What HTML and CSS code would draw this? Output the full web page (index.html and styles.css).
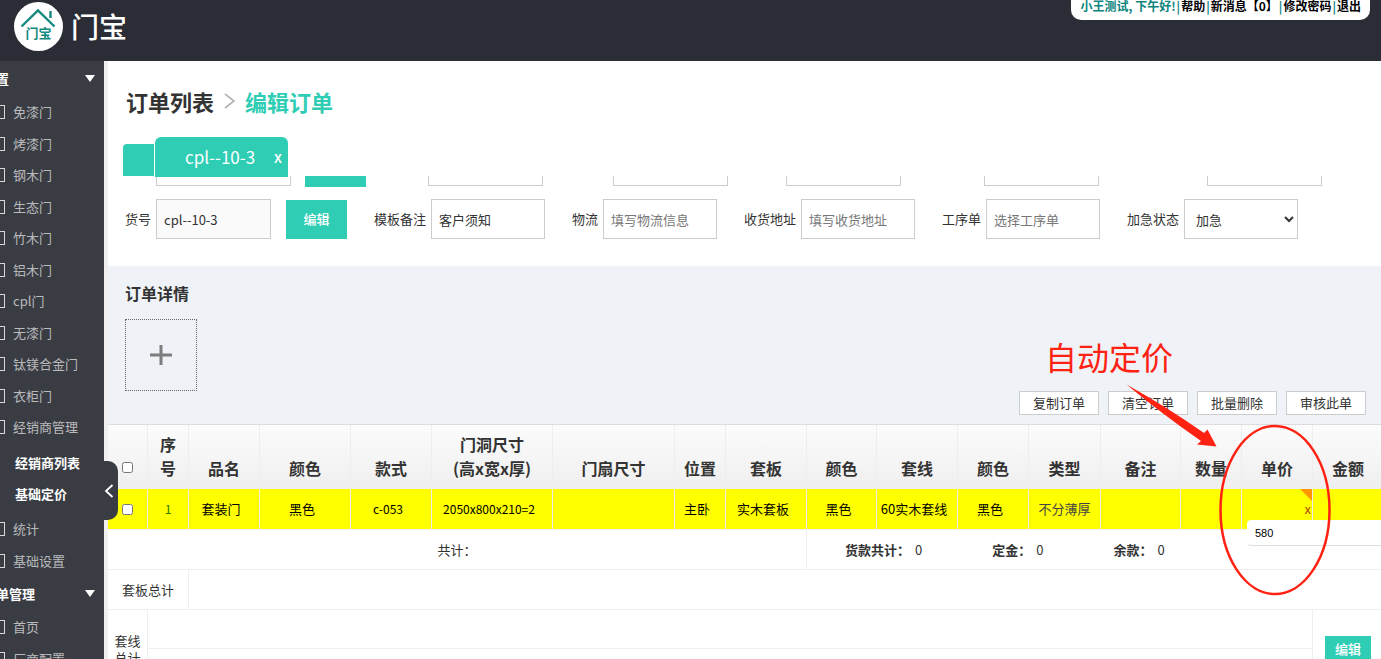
FILE: index.html
```html
<!DOCTYPE html>
<html lang="zh-CN">
<head>
<meta charset="utf-8">
<title>门宝 - 编辑订单</title>
<link rel="stylesheet" href="styles.css">
</head>
<body>
<header class="topbar">
  <svg class="logo" viewBox="0 0 49 49" aria-hidden="true">
    <circle cx="24.5" cy="24.5" r="24.5" fill="#fff"/>
    <path d="M7.500 24.500 24 8.500l16.500 16M36.500 9v7" fill="none" stroke="#14897f" stroke-width="2.400"/>
    <text class="logo-text" x="24.5" y="36" text-anchor="middle">门宝</text>
  </svg>
  <span class="brand">门宝</span>
  <nav class="account"><span>小王测试, 下午好!</span><i>|</i><a href="#">帮助</a><i>|</i><a href="#">新消息【0】</a><i>|</i><a href="#">修改密码</a><i>|</i><a href="#">退出</a></nav>
</header>
<div class="shell">
  <aside class="sidebar">
    <button class="group">设置<span class="caret"></span></button>
    <ul class="menu">
      <li><a href="#">免漆门</a></li><li><a href="#">烤漆门</a></li><li><a href="#">钢木门</a></li>
      <li><a href="#">生态门</a></li><li><a href="#">竹木门</a></li><li><a href="#">铝木门</a></li>
      <li><a href="#">cpl门</a></li><li><a href="#">无漆门</a></li><li><a href="#">钛镁合金门</a></li>
      <li><a href="#">衣柜门</a></li><li><a href="#">经销商管理</a></li>
    </ul>
    <ul class="submenu">
      <li><a href="#">经销商列表</a></li><li><a href="#">基础定价</a></li>
    </ul>
    <ul class="menu">
      <li><a href="#">统计</a></li><li><a href="#">基础设置</a></li>
    </ul>
    <button class="group">订单管理<span class="caret"></span></button>
    <ul class="menu">
      <li><a href="#">首页</a></li><li><a href="#">厂商配置</a></li>
    </ul>
  </aside>
  <button class="collapse" aria-label="收起菜单"><svg viewBox="0 0 10 14" width="10" height="14"><path d="M8.500 1 2 7l6.500 6" fill="none" stroke="#fff" stroke-width="1.800"/></svg></button>
  <main class="main">
    <h1 class="crumbs"><a href="#">订单列表</a><svg viewBox="0 0 11 16" width="11" height="16"><path d="M1 1l9 7-9 7" fill="none" stroke="#b5b5b5" stroke-width="1.700"/></svg><span class="current">编辑订单</span></h1>
    <div class="tabs">
      <button class="tab-stub" aria-label="标签列表"></button>
      <div class="tab"><span>cpl--10-3</span><button class="tab-close">x</button></div>
    </div>
    <form class="order-form">
      <div class="row-top">
        <input class="field" aria-label="订单号">
        <button type="button" class="btn" aria-label="选择"></button>
        <input class="field" aria-label="客户">
        <input class="field" aria-label="电话">
        <input class="field" aria-label="日期">
        <input class="field" aria-label="交期">
        <input class="field" aria-label="备注">
      </div>
      <div class="row-main">
        <div class="pair"><label for="sku">货号</label><input id="sku" class="field readonly" value="cpl--10-3" readonly></div>
        <button type="button" class="btn">编辑</button>
        <div class="pair"><label for="tpl">模板备注</label><input id="tpl" class="field" value="客户须知"></div>
        <div class="pair"><label for="ship">物流</label><input id="ship" class="field" placeholder="填写物流信息"></div>
        <div class="pair"><label for="addr">收货地址</label><input id="addr" class="field" placeholder="填写收货地址"></div>
        <div class="pair"><label for="proc">工序单</label><input id="proc" class="field" placeholder="选择工序单"></div>
        <div class="pair"><label for="urgent">加急状态</label><select id="urgent" class="field"><option>加急</option></select></div>
      </div>
    </form>
    <section class="details">
      <h2 class="details-title">订单详情</h2>
      <button class="add" aria-label="添加"><svg viewBox="0 0 22 22" width="22" height="22"><path d="M11 1v20M0 11h22" stroke="#7d7d7d" stroke-width="3"/></svg></button>
      <div class="tools">
        <button class="tool">复制订单</button><button class="tool">清空订单</button><button class="tool">批量删除</button><button class="tool">审核此单</button>
      </div>
      <div class="table-wrap">
      <table class="orders">
        <colgroup><col class="w40"><col class="w41"><col class="w71"><col class="w91"><col class="w81"><col class="w121"><col class="w122"><col class="w51"><col class="w81"><col class="w70"><col class="w81"><col class="w71"><col class="w72"><col class="w80"><col class="w61"><col class="w71"><col class="w71"></colgroup>
        <thead>
          <tr><th><input type="checkbox" class="tick" aria-label="全选"></th><th>序<br>号</th><th>品名</th><th>颜色</th><th>款式</th><th>门洞尺寸<br>(高x宽x厚)</th><th>门扇尺寸</th><th>位置</th><th>套板</th><th>颜色</th><th>套线</th><th>颜色</th><th>类型</th><th>备注</th><th>数量</th><th>单价</th><th>金额</th></tr>
        </thead>
        <tbody>
          <tr class="item"><td class="check"><input type="checkbox" class="tick" aria-label="选择第1行"></td><td class="num">1</td><td>套装门</td><td>黑色</td><td class="latin">c-053</td><td class="latin">2050x800x210=2</td><td></td><td>主卧</td><td>实木套板</td><td>黑色</td><td>60实木套线</td><td>黑色</td><td class="type">不分薄厚</td><td></td><td></td>
            <td class="price"><span class="corner"></span><button class="clear">x</button><input class="price-input" value="580" aria-label="单价"></td><td></td></tr>
          <tr class="sum"><td colspan="9">共计：</td><td colspan="8"><div class="totals"><span><b>货款共计：</b>0</span><span><b>定金：</b>0</span><span><b>余款：</b>0</span></div></td></tr>
          <tr class="sum"><td colspan="2">套板总计</td><td colspan="15"></td></tr>
          <tr class="line"><td rowspan="2" class="wrap">套线总计</td><td colspan="15"></td><td rowspan="2"><button class="btn small">编辑</button></td></tr>
          <tr class="line"><td colspan="15"></td></tr>
        </tbody>
      </table>
      </div>
      <div class="note">
        <span class="note-text">自动定价</span>
        <svg class="note-mark" viewBox="0 0 300 260" width="300" height="260" aria-hidden="true">
          <path d="M86.500 44.500Q127 67 164 93l3.500-3.500L176.500 106.500 157 104.500l4-3.500Q122 74 86.500 44.500Z" fill="#ff2213"/>
          <ellipse cx="235" cy="170" rx="54.500" ry="84" fill="none" stroke="#ff2213" stroke-width="2.500"/>
        </svg>
      </div>
    </section>
  </main>
</div>
</body>
</html>
```
FILE: styles.css
```css
* { box-sizing: border-box; }
html, body { height: 100%; }
body {
  margin: 0;
  display: flex;
  flex-direction: column;
  overflow: hidden;
  font: 13px/20px "Noto Sans CJK SC", "Noto Sans", sans-serif;
  color: #333;
  background: #fff;
}
a { color: inherit; text-decoration: none; }
ul { list-style: none; margin: 0; padding: 0; }
button { font: inherit; color: inherit; border: 0; padding: 0; background: none; cursor: pointer; }

.topbar {
  flex: none;
  display: flex;
  align-items: flex-start;
  height: 61px;
  padding: 0 11px 0 14px;
  background: #2a2d35;
}
.logo { width: 49px; height: 49px; margin-top: 2px; }
.logo-text { font-size: 13px; font-weight: 700; fill: #14897f; }
.brand { margin: 4px 0 0 8px; font-size: 28px; line-height: 44px; font-weight: 500; color: #fff; }
.account {
  display: flex;
  gap: 1px;
  margin-left: auto;
  padding: 0 9px 8px 10px;
  border-radius: 0 0 10px 10px;
  background: #fff;
  color: #0c857e;
  font-size: 12px;
  line-height: 12px;
  font-weight: 700;
  white-space: nowrap;
}
.account a { color: #000; }
.account i { font-style: normal; }

.shell { flex: 1; display: flex; position: relative; min-height: 0; }
.sidebar {
  flex: none;
  width: 108px;
  overflow: hidden;
  background: #393c43;
  border-right: 4px solid #f1eff0;
  color: #b9babc;
}
.group {
  display: flex;
  align-items: center;
  justify-content: space-between;
  width: 112px;
  height: 35px;
  margin-left: -17px;
  color: #fff;
  font-weight: 700;
}
.caret {
  border: 5px solid transparent;
  border-top: 7px solid #fff;
  border-bottom: 0;
}
.menu li {
  display: flex;
  align-items: center;
  height: 32px;
  margin-left: -9px;
}
.menu li:nth-child(even) { height: 31px; }
.menu li::before {
  content: "";
  width: 12px;
  height: 12px;
  margin-right: 8px;
  border: 1px solid #d8d8d8;
}
.menu a { white-space: nowrap; }
.submenu { padding: 4px 0 4px 15px; color: #fff; font-weight: 700; }
.submenu li { height: 31px; line-height: 31px; }
.collapse {
  position: absolute;
  left: 104px;
  top: 400px;
  z-index: 2;
  display: flex;
  align-items: center;
  width: 14px;
  height: 59px;
  border-radius: 0 10px 10px 0;
  background: #393c43;
}

.main { flex: 1; min-width: 0; display: flex; flex-direction: column; overflow: hidden; }
.main > * { flex: none; }
.crumbs {
  display: flex;
  align-items: center;
  gap: 10px;
  margin: 24px 18px 20px;
  font-size: 22px;
  line-height: 32px;
  font-weight: 700;
}
.current { color: #30cdb5; }
.tabs { display: flex; align-items: flex-end; gap: 1px; height: 39px; padding-left: 15px; }
.tab-stub { width: 31px; height: 32px; border-radius: 4px 0 0 0; background: #30cdb5; }
.tab {
  position: relative;
  z-index: 1;
  display: flex;
  align-items: center;
  justify-content: flex-end;
  gap: 19px;
  width: 133px;
  height: 40px;
  padding-right: 6px;
  margin-bottom: -1px;
  border-radius: 6px 6px 0 0;
  background: #30cdb5;
  color: #fff;
  font-size: 17px;
}
.tab-close { font-size: 15px; font-weight: 500; }

.order-form { padding: 0 17px 27px; overflow: hidden; }
.row-top {
  display: flex;
  margin: -30px 0 12px 31px;
}
.row-top .field { width: 115px; }
.row-top .field:nth-child(1) { width: 135px; margin-right: 14px; }
.row-top .field:nth-child(3) { margin-left: 62px; }
.row-top .field:nth-child(4) { margin-left: 70px; }
.row-top .field:nth-child(5) { margin-left: 58px; }
.row-top .field:nth-child(6) { margin-left: 83px; }
.row-top .field:nth-child(7) { margin-left: 108px; }
.row-top .btn { height: 41px; }
.row-main { display: flex; align-items: center; gap: 27px; }
.row-main > .btn { margin-left: -12px; }
.pair { display: flex; align-items: center; gap: 5px; white-space: nowrap; }
.field {
  flex: none;
  width: 114px;
  height: 40px;
  padding: 0 7px;
  border: 1px solid #ccc;
  border-radius: 0;
  background: #fff;
  color: #333;
  font: inherit;
}
#sku { width: 115px; }
.field.readonly { background: #fafafa; }
.field::placeholder { color: #777; }
.btn { flex: none; width: 61px; height: 39px; background: #30cdb5; color: #fff; font-weight: 500; }
.btn.small { display: block; width: 46px; height: 26px; margin-left: 12px; }

.main > .details { position: relative; flex: 1 0 auto; background: #eff3f7; }
.details-title { margin: 0; padding: 15px 17px 14px; font-size: 16px; line-height: 24px; }
.add {
  display: flex;
  align-items: center;
  justify-content: center;
  width: 72px;
  height: 72px;
  margin-left: 17px;
  border: 1px dotted #666;
}
.tools { display: flex; justify-content: flex-end; gap: 9px; padding: 0 15px 9px 0; }
.tool { width: 80px; height: 24px; border: 1px solid #ccc; background: #fff; line-height: 22px; }
.table-wrap { overflow: hidden; background: #fff; }
.orders {
  width: 100%;
  table-layout: fixed;
  border-collapse: separate;
  border-spacing: 0;
  border-top: 1px solid #ddd;
}
.w40 { width: 40px; }
.w41 { width: 41px; }
.w51 { width: 51px; }
.w61 { width: 61px; }
.w70 { width: 70px; }
.w71 { width: 71px; }
.w72 { width: 72px; }
.w80 { width: 80px; }
.w81 { width: 81px; }
.w91 { width: 91px; }
.w121 { width: 121px; }
.w122 { width: 122px; }
.orders th {
  height: 64px;
  padding: 7px 0 9px;
  vertical-align: bottom;
  font-size: 16px;
  line-height: 24px;
  border-right: 1px solid #eee;
}
.orders thead { background: linear-gradient(#fcfcfc, #efefef); }
.orders td {
  height: 40px;
  padding: 0;
  text-align: center;
  border-right: 1px solid #eee;
  border-bottom: 1px solid #eee;
  white-space: nowrap;
}
.tick { display: block; width: 11px; height: 11px; margin: 0 auto; }
.orders th .tick { margin-bottom: 7px; }
.item { background: #ff0; color: #000; }
.orders .item td { height: 41px; padding-right: 6px; }
.orders .item .check, .orders .item .num, .orders .item .type { padding-right: 0; }
.item .num { color: #2c7a00; font-size: 12px; }
.item .type { color: #444; }
.item .latin { font-size: 12px; }
.price { position: relative; }
.corner {
  position: absolute;
  top: 0;
  right: 0;
  border-top: 12px solid #ff9800;
  border-left: 12px solid transparent;
}
.clear { position: absolute; top: 10px; right: 1px; color: #b3470b; }
.price-input {
  position: absolute;
  left: 5px;
  top: 31px;
  z-index: 1;
  width: 150px;
  height: 26px;
  padding: 0 8px;
  border: 0;
  border-bottom: 1px solid #ddd;
  border-radius: 4px;
  background: #fff;
  font: 11px "Liberation Sans", sans-serif;
}
.totals { display: flex; gap: 70px; padding-left: 38px; }
.totals b { margin-right: 5px; }
.orders .line td { height: 39px; }
.orders .line .wrap { padding: 0 6px; line-height: 17px; white-space: normal; }

.note { position: absolute; top: 74px; left: 932px; z-index: 2; width: 300px; pointer-events: none; }
.note-text {
  position: absolute;
  left: 5px;
  top: -6px;
  color: #ff2213;
  font-size: 32px;
  line-height: 44px;
  white-space: nowrap;
}
.note-mark { display: block; }
```
